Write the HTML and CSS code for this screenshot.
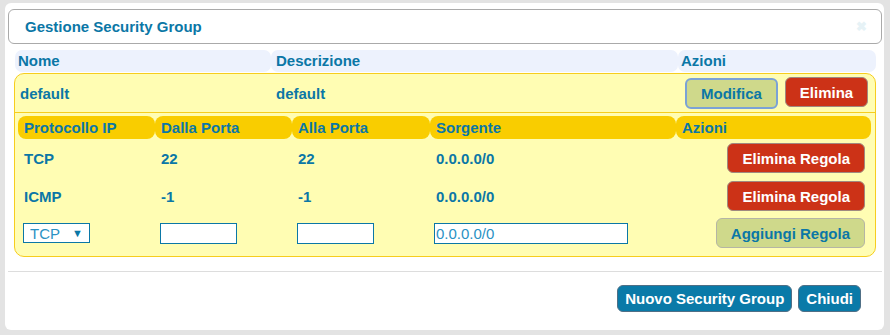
FILE: index.html
```html
<!DOCTYPE html>
<html lang="it">
<head>
    <meta charset="UTF-8">
    <title>Gestione Security Group</title>
    <link rel="stylesheet" href="styles.css">
</head>
<body>
<div class="dialog">
    <div class="titleBar">
        <span class="titleText">Gestione Security Group</span>
        <span class="closeBtn">&#10006;</span>
    </div>

    <div class="content">
        <div class="groupHead">
            <div class="hCell">Nome</div>
            <div class="hCell">Descrizione</div>
            <div class="hCell">Azioni</div>
        </div>

        <div class="groupBox">
            <div class="groupRow">
                <div class="gCell">default</div>
                <div class="gCell">default</div>
                <div class="gCell actions">
                    <button class="btn btnGreen focused">Modifica</button>
                    <button class="btn btnRed">Elimina</button>
                </div>
            </div>

            <div class="rules">
                <div class="ruleHead">
                    <div class="rhCell">Protocollo IP</div>
                    <div class="rhCell">Dalla Porta</div>
                    <div class="rhCell">Alla Porta</div>
                    <div class="rhCell">Sorgente</div>
                    <div class="rhCell">Azioni</div>
                </div>
                <div class="ruleRow">
                    <div class="rCell">TCP</div>
                    <div class="rCell">22</div>
                    <div class="rCell">22</div>
                    <div class="rCell">0.0.0.0/0</div>
                    <div class="rCell right"><button class="btn btnRed">Elimina Regola</button></div>
                </div>
                <div class="ruleRow">
                    <div class="rCell">ICMP</div>
                    <div class="rCell">-1</div>
                    <div class="rCell">-1</div>
                    <div class="rCell">0.0.0.0/0</div>
                    <div class="rCell right"><button class="btn btnRed">Elimina Regola</button></div>
                </div>
                <div class="ruleRow newRow">
                    <div class="rCell">
                        <span class="selWrap">
                            <select class="sel"><option>TCP</option><option>UDP</option><option>ICMP</option></select>
                        </span>
                    </div>
                    <div class="rCell"><input class="inp small" type="text"></div>
                    <div class="rCell"><input class="inp small" type="text"></div>
                    <div class="rCell"><input class="inp wide" type="text" value="0.0.0.0/0"></div>
                    <div class="rCell right"><button class="btn btnGreen">Aggiungi Regola</button></div>
                </div>
            </div>
        </div>
    </div>

    <div class="footer">
        <button class="btn btnBlue">Nuovo Security Group</button>
        <button class="btn btnBlue">Chiudi</button>
    </div>
</div>
</body>
</html>
```

FILE: styles.css
```css
*{margin:0;padding:0;box-sizing:border-box}
html,body{height:100%}
body{background:#e3e3e3;padding:3px 6px 5px 5px;font:bold 15px "Liberation Sans",Arial,sans-serif;color:#0b77a6;overflow:hidden}

.dialog{width:879px;height:327px;background:#fff;border-radius:6px;padding-top:6px}

.titleBar{height:35px;margin:0 2px 0 3px;border:1px solid #aaa;border-radius:6px;display:flex;align-items:center;justify-content:space-between;padding:0 14px 0 16px}
.closeBtn{color:#e6f2f6;font-size:13px}

.content{margin:6px 8px 0 9px}

.groupHead{display:grid;grid-template-columns:256px 407px 1fr;height:22px;margin:0 0 1px 1px}
.hCell{background:#edf2fd;border-radius:7px;line-height:22px;padding-left:3px}
.hCell:nth-child(2){padding-left:5px}

.groupBox{background:#fffdb3;border:1px solid #f6cd1e;border-radius:10px;padding-bottom:5px}
.groupRow{display:grid;grid-template-columns:256px 407px 1fr;height:39px;border-bottom:1px solid #f6cd1e;align-items:center}
.gCell{padding-left:5px}
.actions{display:flex;gap:7px;padding-left:7px}

.rules{padding:3px 4px 0 3px}
.ruleHead,.ruleRow{display:grid;grid-template-columns:137px 137px 138px 246px 1fr}
.ruleHead{height:23px}
.rhCell{background:#f9cd00;border-radius:8px;line-height:23px;padding-left:6px}
.ruleRow{height:38px;align-items:center}
.newRow{height:36px}
.rCell{padding-left:6px}
.right{display:flex;justify-content:flex-end;padding-right:6px}

.btn{font:bold 15px "Liberation Sans",Arial,sans-serif;border:1px solid #a9a9a9;border-radius:6px;padding:0 14px;height:30px;cursor:pointer}
.btnRed{background:#cc3217;color:#fff;border-color:#a08a80}
.btnGreen{background:#cfd98b;color:#0b77a6;border-color:#b5b5a5}
.focused{border:2px solid #7ba2d6;height:31px;margin-top:1px}
.btnBlue{background:#0a7aa8;color:#fff;border-color:#4f6f86;height:27px;padding:0 7px}

.selWrap{position:relative;display:inline-block}
.selWrap:after{content:"\25BC";position:absolute;right:7px;top:4px;font-size:11px;color:#0b77a6;pointer-events:none}
.sel{appearance:none;-webkit-appearance:none;width:67px;height:20px;border:1px solid #0b77a6;border-radius:0;background:#fff;font:normal 15px "Liberation Sans",Arial,sans-serif;color:#2a92c4;padding-left:6px;margin-left:-1px}
.inp{height:21px;border:1px solid #0b77a6;background:#fff;font:normal 15px "Liberation Sans",Arial,sans-serif;color:#2a92c4;padding:0 1px;margin-left:-1px}
.small{width:77px}
.wide{width:194px;margin-left:-2px}

.footer{margin:14px 2px 0 3px;border-top:1px solid #ddd;display:flex;justify-content:flex-end;gap:6px;padding:13px 21px 0 0}
```
